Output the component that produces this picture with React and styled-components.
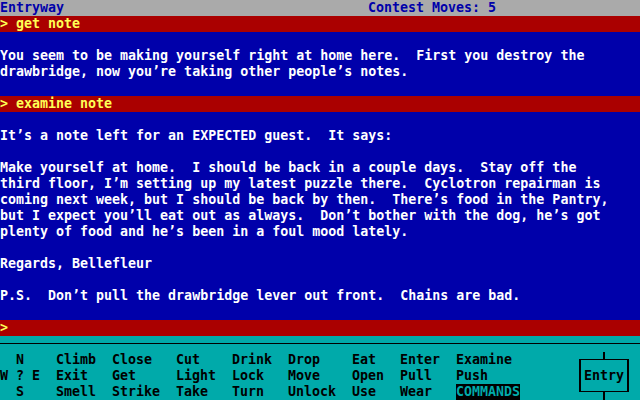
import React from 'react';
import styled, {createGlobalStyle} from 'styled-components';

const GlobalStyle = createGlobalStyle`
  html, body {
    margin: 0;
    padding: 0;
    background: #000;
  }
  body {
    width: 640px;
    height: 400px;
    overflow: hidden;
  }
`;

const Screen = styled.div`
  width: 640px;
  height: 400px;
  display: flex;
  flex-direction: column;
  background: #0000aa;
  color: #fff;
  font-family: "DejaVu Sans Mono", "Liberation Mono", monospace;
  font-size: 13.3px;
  font-weight: bold;
  line-height: 16px;
  white-space: pre;
`;

const StatusBar = styled.div`
  height: 16px;
  display: flex;
  background: #aaaaaa;
  color: #0000aa;
`;

const Place = styled.span`
  width: 368px;
`;

const Transcript = styled.div`
  flex: 1;
  display: flex;
  flex-direction: column;
`;

const Prompt = styled.div`
  height: 16px;
  background: #aa0000;
  color: #ffff55;
`;

const Response = styled.div`
  padding: 16px 0;
  display: flex;
  flex-direction: column;
  gap: 16px;
`;

const Para = styled.div``;

const Panel = styled.div`
  height: 64px;
  display: flex;
  flex-direction: column;
  background: #00aaaa;
  color: #000;
`;

const Rule = styled.div`
  height: 16px;
  position: relative;
  &::after {
    content: "";
    position: absolute;
    left: 0;
    right: 0;
    top: 7px;
    height: 1px;
    background: #000;
  }
`;

const Deck = styled.div`
  height: 48px;
  display: flex;
`;

const Compass = styled.div`
  width: 56px;
  display: grid;
  grid-template-columns: 16px 16px 24px;
  grid-template-rows: repeat(3, 16px);
`;

const Point = styled.span`
  grid-column: ${props => props.col};
  grid-row: ${props => props.row};
`;

const Verbs = styled.div`
  display: grid;
  grid-template-columns: 56px 64px 56px 56px 64px 48px 56px 64px;
  grid-template-rows: repeat(3, 16px);
  grid-auto-flow: column;
`;

const Verb = styled.span`
  ${props => props.active && `
    background: #000;
    color: #00aaaa;
  `}
`;

const Entry = styled.div`
  position: relative;
  width: 56px;
  height: 48px;
  margin-left: auto;
  margin-right: 8px;
  &::before, &::after {
    content: "";
    position: absolute;
    left: 27px;
    width: 2px;
    height: 7px;
    background: #000;
  }
  &::before { top: 0; }
  &::after { bottom: 0; height: 8px; }
`;

const Frame = styled.div`
  margin: 7px 3px 0 3px;
  height: 31px;
  border: solid #000;
  border-width: 1px 2px;
  padding: 8px 0 0 3px;
  box-sizing: content-box;
  height: 23px;
`;

const verbs = [
  'Climb', 'Exit', 'Smell',
  'Close', 'Get', 'Strike',
  'Cut', 'Light', 'Take',
  'Drink', 'Lock', 'Turn',
  'Drop', 'Move', 'Unlock',
  'Eat', 'Open', 'Use',
  'Enter', 'Pull', 'Wear',
  'Examine', 'Push', 'COMMANDS',
];

const App = () => {
  return (
    <Screen>
      <GlobalStyle/>
      <StatusBar>
        <Place>Entryway</Place>
        <span>Contest Moves: 5</span>
      </StatusBar>
      <Transcript>
        <Prompt>&gt; get note</Prompt>
        <Response>
          <Para>{`You seem to be making yourself right at home here.  First you destroy the
drawbridge, now you’re taking other people’s notes.`}</Para>
        </Response>
        <Prompt>&gt; examine note</Prompt>
        <Response>
          <Para>It’s a note left for an EXPECTED guest.  It says:</Para>
          <Para>{`Make yourself at home.  I should be back in a couple days.  Stay off the
third floor, I’m setting up my latest puzzle there.  Cyclotron repairman is
coming next week, but I should be back by then.  There’s food in the Pantry,
but I expect you’ll eat out as always.  Don’t bother with the dog, he’s got
plenty of food and he’s been in a foul mood lately.`}</Para>
          <Para>Regards, Bellefleur</Para>
          <Para>P.S.  Don’t pull the drawbridge lever out front.  Chains are bad.</Para>
        </Response>
        <Prompt>&gt;</Prompt>
      </Transcript>
      <Panel>
        <Rule/>
        <Deck>
          <Compass>
            <Point col={2} row={1}>N</Point>
            <Point col={1} row={2}>W</Point>
            <Point col={2} row={2}>?</Point>
            <Point col={3} row={2}>E</Point>
            <Point col={2} row={3}>S</Point>
          </Compass>
          <Verbs>
            {verbs.map(v => (
              <Verb key={v} active={v === 'COMMANDS'}>{v}</Verb>
            ))}
          </Verbs>
          <Entry>
            <Frame>Entry</Frame>
          </Entry>
        </Deck>
      </Panel>
    </Screen>
  );
};

export default App;
